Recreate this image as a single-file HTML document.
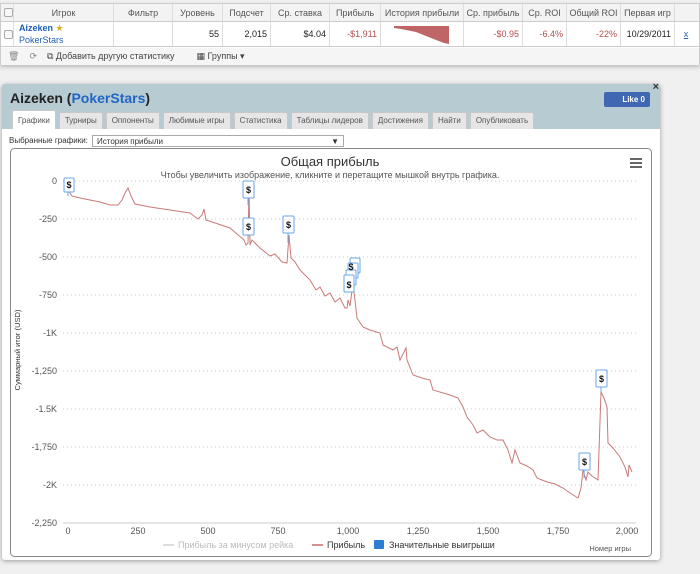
<!DOCTYPE html>
<html><head><meta charset="utf-8"><style>
*{box-sizing:border-box;margin:0;padding:0}
body{width:700px;height:574px;background:#f0f0f0;font-family:"Liberation Sans","DejaVu Sans",sans-serif;font-size:9px;color:#333;position:relative;overflow:hidden}
.tbl{position:absolute;left:0;top:3px;width:700px;height:62px;background:#fff;border:1px solid #ccc;box-shadow:0 2px 4px #bbb}
.hd{position:absolute;top:0;height:18px;background:#f3f3f3;border-bottom:1px solid #ccc;width:100%}
.c{position:absolute;height:100%;border-right:1px solid #ddd;text-align:center;line-height:18px;color:#555}
.row{position:absolute;top:18px;height:25px;width:100%;border-bottom:1px solid #ccc}
.row .c{line-height:25px;text-align:right;padding-right:3px;color:#222}
.red{color:#b05050!important}
.tb{position:absolute;top:44px;height:17px;width:100%;background:#f5f5f5;line-height:17px;color:#444}
.cb{position:absolute;width:9px;height:9px;border:1px solid #aaa;border-radius:2px;background:#f8f8f8}
.panel{position:absolute;left:2px;top:84px;width:658px;height:476px;background:#fff;box-shadow:0 1px 5px #999;border-radius:3px}
.ph{height:45px;background:#b7cbd3;border-radius:3px 3px 0 0;position:relative}
.ph h1{position:absolute;left:8px;top:6px;font-size:14px;font-weight:bold;color:#222}
.ph h1 span{color:#1f66c6}
.tabs{position:absolute;left:10px;top:26px;height:19px}
.tab{float:left;height:17px;margin-top:2px;margin-right:3px;padding:0 5px;background:#e6e6e6;border:1px solid #c8c8c8;border-bottom:none;line-height:16px;font-size:8px;color:#555;border-radius:2px 2px 0 0}
.tab.a{background:#fff;height:19px;margin-top:0;line-height:19px}
.like{position:absolute;right:10px;top:8px;width:46px;height:15px;background:#4267b2;border-radius:2px;color:#fff;font-size:8px;font-weight:bold;line-height:15px;text-align:right;padding-right:5px}
</style></head><body>
<div class="tbl">
 <div class="hd">
  <div class="c" style="left:0;width:13px"></div>
  <div class="c" style="left:13px;width:100px">Игрок</div>
  <div class="c" style="left:113px;width:59px">Фильтр</div>
  <div class="c" style="left:172px;width:50px">Уровень</div>
  <div class="c" style="left:222px;width:48px">Подсчет</div>
  <div class="c" style="left:270px;width:59px">Ср. ставка</div>
  <div class="c" style="left:329px;width:51px">Прибыль</div>
  <div class="c" style="left:380px;width:83px">История прибыли</div>
  <div class="c" style="left:463px;width:59px">Ср. прибыль</div>
  <div class="c" style="left:522px;width:44px">Ср. ROI</div>
  <div class="c" style="left:566px;width:54px">Общий ROI</div>
  <div class="c" style="left:620px;width:54px">Первая игр</div>
  <div class="cb" style="left:3px;top:4px"></div>
 </div>
 <div class="row">
  <div class="c" style="left:0;width:13px"></div>
  <div class="c" style="left:13px;width:100px;text-align:left;padding-left:5px;line-height:12px"><b style="color:#1f5fb0">Aizeken</b> <span style="color:#d4b020">★</span><br><span style="color:#1f5fb0">PokerStars</span></div>
  <div class="c" style="left:113px;width:59px"></div>
  <div class="c" style="left:172px;width:50px">55</div>
  <div class="c" style="left:222px;width:48px">2,015</div>
  <div class="c" style="left:270px;width:59px">$4.04</div>
  <div class="c red" style="left:329px;width:51px">-$1,911</div>
  <div class="c" style="left:380px;width:83px"><svg width="83" height="25" style="position:absolute;left:0;top:0"><polygon points="13,4 68,4 68,22 63,21 50,16 35,10 20,7 13,6" fill="#c06565"/></svg></div>
  <div class="c red" style="left:463px;width:59px">-$0.95</div>
  <div class="c red" style="left:522px;width:44px">-6.4%</div>
  <div class="c red" style="left:566px;width:54px">-22%</div>
  <div class="c" style="left:620px;width:54px">10/29/2011</div>
  <div class="c" style="left:674px;width:26px;text-align:center;color:#1f5fb0;text-decoration:underline">x</div>
  <div class="cb" style="left:3px;top:8px"></div>
 </div>
 <div class="tb"><span style="margin-left:7px;color:#888">🗑</span><span style="margin-left:10px;color:#888">⟳</span><span style="margin-left:10px">⧉ Добавить другую статистику</span><span style="margin-left:22px">▦ Группы ▾</span></div>
</div>
<div class="panel">
 <div class="ph">
  <h1>Aizeken (<span>PokerStars</span>)</h1>
  <div class="like">Like 0</div>
  <div style="position:absolute;right:1px;top:-3px;font-size:11px;font-weight:bold">×</div>
  <div class="tabs">
   <div class="tab a">Графики</div><div class="tab">Турниры</div><div class="tab">Оппоненты</div><div class="tab">Любимые игры</div><div class="tab">Статистика</div><div class="tab">Таблицы лидеров</div><div class="tab">Достижения</div><div class="tab">Найти</div><div class="tab">Опубликовать</div>
  </div>
 </div>
 <div style="position:absolute;left:7px;top:52px;font-size:8px">Выбранные графики:</div>
 <div style="position:absolute;left:90px;top:51px;width:252px;height:12px;border:1px solid #aaa;font-size:8px;line-height:11px;padding-left:4px">История прибыли<span style="position:absolute;right:4px">▼</span></div>
</div>
<svg style="position:absolute;left:0;top:0" width="700" height="574" font-family="Liberation Sans, DejaVu Sans, sans-serif">
 <rect x="10.5" y="148.5" width="641" height="408" rx="4" fill="none" stroke="#888"/>
 <text x="330" y="166" text-anchor="middle" font-size="13" fill="#333">Общая прибыль</text>
 <text x="330" y="178" text-anchor="middle" font-size="9" fill="#555">Чтобы увеличить изображение, кликните и перетащите мышкой внутрь графика.</text>
 <g stroke="#666" stroke-width="2"><line x1="630" y1="159" x2="642" y2="159"/><line x1="630" y1="163" x2="642" y2="163"/><line x1="630" y1="167" x2="642" y2="167"/></g>
 <g stroke="#ccc" stroke-dasharray="1,3">
  <line x1="63" y1="181" x2="636" y2="181"/><line x1="63" y1="219" x2="636" y2="219"/><line x1="63" y1="257" x2="636" y2="257"/><line x1="63" y1="295" x2="636" y2="295"/><line x1="63" y1="333" x2="636" y2="333"/><line x1="63" y1="371" x2="636" y2="371"/><line x1="63" y1="409" x2="636" y2="409"/><line x1="63" y1="447" x2="636" y2="447"/><line x1="63" y1="485" x2="636" y2="485"/>
 </g>
 <line x1="63" y1="523" x2="636" y2="523" stroke="#ccc"/>
 <g font-size="9" fill="#555" text-anchor="end">
  <text x="57" y="184">0</text><text x="57" y="222">-250</text><text x="57" y="260">-500</text><text x="57" y="298">-750</text><text x="57" y="336">-1K</text><text x="57" y="374">-1,250</text><text x="57" y="412">-1.5K</text><text x="57" y="450">-1,750</text><text x="57" y="488">-2K</text><text x="57" y="526">-2,250</text>
 </g>
 <g font-size="9" fill="#555" text-anchor="middle">
  <text x="68" y="534">0</text><text x="138" y="534">250</text><text x="208" y="534">500</text><text x="278" y="534">750</text><text x="348" y="534">1,000</text><text x="418" y="534">1,250</text><text x="488" y="534">1,500</text><text x="558" y="534">1,750</text><text x="627" y="534">2,000</text>
 </g>
 <text transform="translate(20,350) rotate(-90)" text-anchor="middle" font-size="7.5" fill="#333">Суммарный итог (USD)</text>
 <text x="631" y="551" text-anchor="end" font-size="7.5" fill="#555">Номер игры</text>
 <line x1="163" y1="545" x2="174" y2="545" stroke="#ddd" stroke-width="2"/>
 <text x="178" y="548" font-size="9" fill="#bbb">Прибыль за минусом рейка</text>
 <line x1="312" y1="545" x2="323" y2="545" stroke="#d59090" stroke-width="2"/>
 <text x="327" y="548" font-size="9" fill="#333">Прибыль</text>
 <rect x="374" y="540" width="10" height="9" rx="1" fill="#2b7cd3"/>
 <text x="389" y="548" font-size="9" fill="#333">Значительные выигрыши</text>
 <polyline fill="none" stroke="#c97a7a" stroke-width="1" points="68,190 72,196 80,198 90,200 100,202 110,205 118,205 122,200 125,193 128,188 131,196 135,204 150,207 170,210 190,213 198,219 202,215 204,209 206,220 230,228 244,240 246,245 248,243 249,190 250,245 252,240 260,248 270,256 275,254 282,262 287,263 289,235 291,258 295,262 300,270 310,280 316,290 320,287 325,296 330,293 335,302 340,298 345,308 347,308 348,300 350,306 353,283 357,318 363,327 370,330 380,333 383,345 393,350 397,347 400,360 404,352 406,348 407,360 413,375 422,378 430,380 433,390 450,395 458,398 463,407 467,417 473,425 477,433 483,430 490,437 497,440 503,440 508,450 512,463 515,450 520,463 527,466 533,470 537,478 547,482 555,484 563,488 570,493 578,498 581,488 583,470 586,480 588,472 592,476 598,480 601,392 604,398 607,407 608,443 613,448 620,457 625,467 628,477 629,465 632,472"/>
 <g stroke="#6aa6ea" fill="#fff">
  <line x1="248" y1="195" x2="248" y2="205"/><line x1="288" y1="233" x2="288" y2="243"/><line x1="68" y1="192" x2="68" y2="196"/><line x1="601" y1="386" x2="601" y2="392"/><line x1="584" y1="470" x2="584" y2="478"/>
  <rect x="64" y="178" width="10" height="14" rx="1"/>
  <rect x="243" y="181" width="11" height="17" rx="1"/>
  <rect x="243" y="218" width="11" height="17" rx="1"/>
  <rect x="283" y="216" width="11" height="17" rx="1"/>
  <rect x="350" y="258" width="10" height="15" rx="1"/>
  <rect x="348" y="263" width="10" height="15" rx="1"/>
  <rect x="346" y="270" width="10" height="15" rx="1"/>
  <rect x="344" y="275" width="10" height="17" rx="1"/>
  <rect x="579" y="453" width="11" height="17" rx="1"/>
  <rect x="596" y="370" width="11" height="17" rx="1"/>
 </g>
 <g font-size="9" font-weight="bold" fill="#111" text-anchor="middle">
  <text x="69" y="188">$</text><text x="248.5" y="193">$</text><text x="248.5" y="230">$</text><text x="288.5" y="228">$</text><text x="351" y="270">$</text><text x="349" y="288">$</text><text x="584.5" y="465">$</text><text x="601.5" y="382">$</text>
 </g>
</svg>
</body></html>
